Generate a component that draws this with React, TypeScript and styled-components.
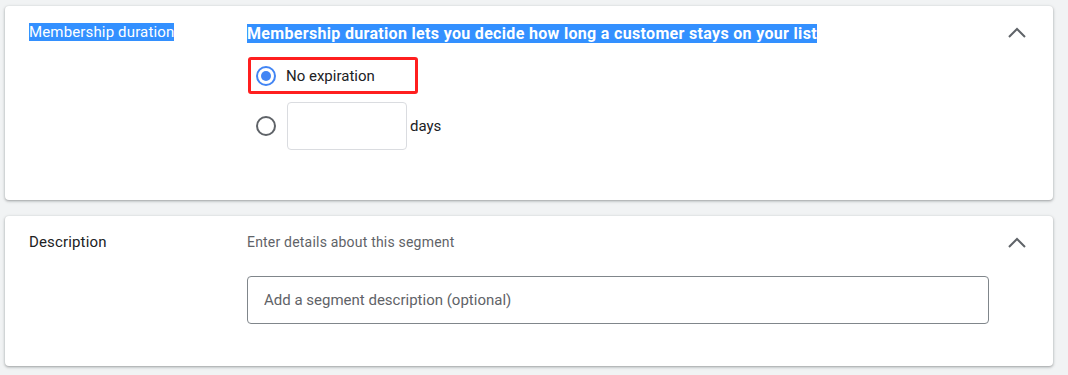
import styled, {createGlobalStyle} from 'styled-components';

const GlobalStyle = createGlobalStyle`
    html, body {
        margin: 0;
        padding: 0;
        background: #f1f3f4;
        font-family: Roboto, "Liberation Sans", Arial, sans-serif;
        color: #202124;
    }
`;

const Page = styled.div`
    padding: 6px 15px 8px 5px;
    display: flex;
    flex-direction: column;
    gap: 16px;
`;

const Card = styled.section<{ $padBottom: number }>`
    background: #ffffff;
    border-radius: 4px;
    box-shadow: 0 1px 2px rgba(60, 64, 67, 0.3), 0 1px 3px 1px rgba(60, 64, 67, 0.15);
    padding: 16px 24px ${({$padBottom}) => $padBottom}px 24px;
    display: grid;
    grid-template-columns: 218px 1fr 40px;
    align-items: start;
`;

const Label = styled.div`
    font-size: 15px;
    line-height: 20px;
    letter-spacing: 0.15px;
`;

const Selected = styled.span`
    background: #3390ff;
    color: #ffffff;
`;

const Body = styled.div<{ $gap: number }>`
    display: flex;
    flex-direction: column;
    align-items: flex-start;
    gap: ${({$gap}) => $gap}px;
`;

const Heading = styled.div`
    font-size: 16px;
    line-height: 24px;
    font-weight: 700;
    letter-spacing: 0.32px;
`;

const Hint = styled.div`
    font-size: 14px;
    line-height: 20px;
    letter-spacing: 0.2px;
    color: #5f6368;
`;

const Options = styled.div`
    display: flex;
    flex-direction: column;
    align-items: flex-start;
    gap: 6px;
    margin-top: 3px;
`;

const OptionRow = styled.label<{ $highlight?: boolean }>`
    display: flex;
    align-items: center;
    gap: 10px;
    box-sizing: border-box;
    padding: 0 5px;
    border: ${({$highlight}) => ($highlight ? '3px solid #ff1f1f' : '2px solid transparent')};
    border-radius: 3px;
    min-width: ${({$highlight}) => ($highlight ? '170px' : 'auto')};
    height: ${({$highlight}) => ($highlight ? '37px' : 'auto')};
    margin-left: ${({$highlight}) => ($highlight ? '1px' : '2px')};
    font-size: 15px;
    color: #202124;
`;

const Radio = styled.span<{ $checked?: boolean }>`
    box-sizing: border-box;
    width: 20px;
    height: 20px;
    border-radius: 50%;
    border: 2px solid ${({$checked}) => ($checked ? '#4285f4' : '#5f6368')};
    display: flex;
    align-items: center;
    justify-content: center;
    flex-shrink: 0;

    &::after {
        content: '';
        width: 10px;
        height: 10px;
        border-radius: 50%;
        background: ${({$checked}) => ($checked ? '#4285f4' : 'transparent')};
    }
`;

const DaysBox = styled.div`
    box-sizing: border-box;
    width: 120px;
    height: 48px;
    border: 1px solid #dadce0;
    border-radius: 4px;
`;

const DaysField = styled.div`
    display: flex;
    align-items: center;
    gap: 3px;
    margin-left: 1px;
`;

const TextInput = styled.input`
    box-sizing: border-box;
    width: 100%;
    height: 48px;
    border: 1px solid #80868b;
    border-radius: 4px;
    padding: 0 16px;
    font-family: inherit;
    font-size: 15px;
    color: #202124;
    background: #fff;
    outline: none;

    &::placeholder {
        color: #5f6368;
    }
`;

const InputWrap = styled.div`
    align-self: stretch;
`;

const Toggle = styled.button`
    justify-self: end;
    width: 24px;
    height: 24px;
    padding: 0;
    margin-top: -1px;
    border: 0;
    background: none;
    display: flex;
    align-items: center;
    justify-content: center;
    color: #5f6368;
`;

const Chevron = () => (
    <svg width="24" height="24" viewBox="0 0 24 24" fill="none">
        <polyline points="4,16 12,8 20,16" stroke="currentColor" strokeWidth="2" />
    </svg>
);

export default function App() {
    return (
        <>
            <GlobalStyle/>
            <Page>
                <Card $padBottom={48}>
                    <Label><Selected>Membership duration</Selected></Label>
                    <Body $gap={8}>
                        <Heading><Selected>Membership duration lets you decide how long a customer stays on your list</Selected></Heading>
                        <Options>
                            <OptionRow $highlight>
                                <Radio $checked/>
                                No expiration
                            </OptionRow>
                            <OptionRow>
                                <Radio/>
                                <DaysField>
                                    <DaysBox/>
                                    days
                                </DaysField>
                            </OptionRow>
                        </Options>
                    </Body>
                    <Toggle aria-label="Collapse"><Chevron/></Toggle>
                </Card>
                <Card $padBottom={42}>
                    <Label>Description</Label>
                    <Body $gap={24}>
                        <Hint>Enter details about this segment</Hint>
                        <InputWrap>
                            <TextInput placeholder="Add a segment description (optional)"/>
                        </InputWrap>
                    </Body>
                    <Toggle aria-label="Collapse"><Chevron/></Toggle>
                </Card>
            </Page>
        </>
    );
}
